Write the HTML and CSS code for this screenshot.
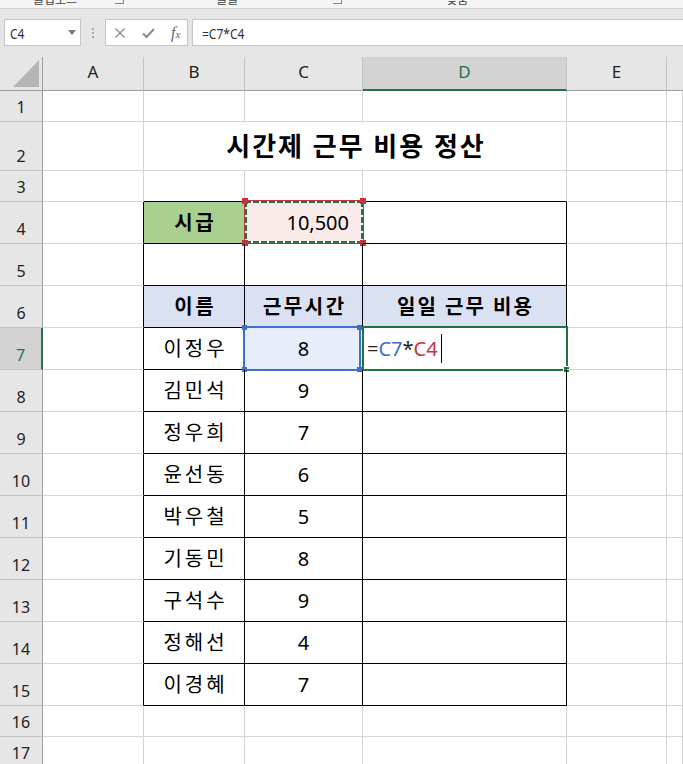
FILE: index.html
```html
<!DOCTYPE html>
<html lang="ko">
<head>
<meta charset="utf-8">
<title>시간제 근무 비용 정산</title>
<link rel="stylesheet" href="styles.css">
</head>
<body>
<div class="ribbon">
  <span class="rlabel l1">클립보드</span>
  <span class="launch k1"></span>
  <span class="rlabel l2">글꼴</span>
  <span class="launch k2"></span>
  <span class="rlabel l3">맞춤</span>
</div>
<div class="fbar">
  <div class="namebox"><span class="nbtext">C4</span><span class="nbarrow"></span></div>
  <div class="dots"><i></i><i></i><i></i></div>
  <div class="btns">
    <svg class="ico" width="12" height="12" viewBox="0 0 12 12"><path d="M1.5 1.5 L10.5 10.5 M10.5 1.5 L1.5 10.5" stroke="#8a8a8a" stroke-width="1.4" fill="none"/></svg>
    <svg class="ico" width="13" height="12" viewBox="0 0 13 12"><path d="M1 6.5 L4.5 10 L12 2" stroke="#8a8a8a" stroke-width="2" fill="none"/></svg>
    <span class="fx"><span class="f">f</span><span class="x">x</span></span>
  </div>
  <div class="finput"><span class="ftext">=C7*C4</span></div>
</div>
<div class="sheet">
  <div class="corner"><svg width="43" height="34" viewBox="0 0 43 34"><path d="M39 3 L39 30 L13 30 Z" fill="#b5b5b5"/></svg></div>
  <div class="ch">A</div><div class="ch">B</div><div class="ch">C</div><div class="ch sel">D</div><div class="ch">E</div><div class="ch last"></div>

  <div class="rh">1</div><div class="c"></div><div class="c"></div><div class="c"></div><div class="c"></div><div class="c"></div><div class="c"></div>

  <div class="rh">2</div><div class="c"></div><div class="c title">시간제 근무 비용 정산</div><div class="c"></div><div class="c"></div>

  <div class="rh">3</div><div class="c"></div><div class="c bb"></div><div class="c bb"></div><div class="c bb"></div><div class="c"></div><div class="c"></div>

  <div class="rh">4</div><div class="c br"></div><div class="c t green bold kb">시급</div><div class="c t rate">10,500<span class="refred"><span class="ants"></span><i class="q tl"></i><i class="q tr"></i><i class="q bl"></i><i class="q br2"></i></span></div><div class="c t"></div><div class="c"></div><div class="c"></div>

  <div class="rh">5</div><div class="c br"></div><div class="c t"></div><div class="c t"></div><div class="c t"></div><div class="c"></div><div class="c"></div>

  <div class="rh">6</div><div class="c br"></div><div class="c t head bold kb">이름</div><div class="c t head bold kb">근무시간</div><div class="c t head bold kh">일일 근무 비용</div><div class="c"></div><div class="c"></div>

  <div class="rh rsel">7</div><div class="c br"></div><div class="c t k">이정우</div><div class="c t blue">8<span class="refblue"><i class="q tl"></i><i class="q tr"></i><i class="q bl"></i><i class="q br2"></i></span></div><div class="c t edit"><span class="eq">=</span><span class="cb">C7</span><span class="eq">*</span><span class="cr">C4</span><span class="caret"></span><span class="active"><i class="handle"></i></span></div><div class="c"></div><div class="c"></div>

  <div class="rh">8</div><div class="c br"></div><div class="c t k">김민석</div><div class="c t">9</div><div class="c t"></div><div class="c"></div><div class="c"></div>

  <div class="rh">9</div><div class="c br"></div><div class="c t k">정우희</div><div class="c t">7</div><div class="c t"></div><div class="c"></div><div class="c"></div>

  <div class="rh">10</div><div class="c br"></div><div class="c t k">윤선동</div><div class="c t">6</div><div class="c t"></div><div class="c"></div><div class="c"></div>

  <div class="rh">11</div><div class="c br"></div><div class="c t k">박우철</div><div class="c t">5</div><div class="c t"></div><div class="c"></div><div class="c"></div>

  <div class="rh">12</div><div class="c br"></div><div class="c t k">기동민</div><div class="c t">8</div><div class="c t"></div><div class="c"></div><div class="c"></div>

  <div class="rh">13</div><div class="c br"></div><div class="c t k">구석수</div><div class="c t">9</div><div class="c t"></div><div class="c"></div><div class="c"></div>

  <div class="rh">14</div><div class="c br"></div><div class="c t k">정해선</div><div class="c t">4</div><div class="c t"></div><div class="c"></div><div class="c"></div>

  <div class="rh">15</div><div class="c br"></div><div class="c t k">이경혜</div><div class="c t">7</div><div class="c t"></div><div class="c"></div><div class="c"></div>

  <div class="rh">16</div><div class="c"></div><div class="c"></div><div class="c"></div><div class="c"></div><div class="c"></div><div class="c"></div>

  <div class="rh">17</div><div class="c"></div><div class="c"></div><div class="c"></div><div class="c"></div><div class="c"></div><div class="c"></div>
</div>
</body>
</html>
```
FILE: styles.css
```css
* { box-sizing: border-box; }
html, body { margin: 0; padding: 0; }
body {
  width: 683px;
  height: 764px;
  overflow: hidden;
  background: #ffffff;
  font-family: "Noto Sans", "Noto Sans CJK KR", sans-serif;
  color: #000;
}

/* ribbon remnant */
.ribbon {
  height: 9px;
  background: #f5f5f5;
  border-bottom: 1px solid #d2d2d2;
  overflow: hidden;
  display: flex;
  align-items: flex-start;
  font-family: "Noto Sans CJK KR", sans-serif;
  font-size: 12px;
  line-height: 12px;
  color: #444;
}
.rlabel { margin-top: -7px; white-space: nowrap; }
.l1 { margin-left: 33px; }
.l2 { margin-left: 92px; }
.l3 { margin-left: 104px; }
.launch {
  width: 9px; height: 9px;
  margin-top: -5px;
  border-right: 1px solid #888;
  border-bottom: 1px solid #888;
}
.k1 { margin-left: 38px; }
.k2 { margin-left: 95px; }

/* formula bar */
.fbar {
  height: 48px;
  background: #e6e6e6;
  padding-top: 10px;
  display: flex;
  align-items: flex-start;
}
.namebox {
  margin-left: 4px;
  width: 77px;
  height: 27px;
  background: #fff;
  border: 1px solid #c6c6c6;
  display: flex;
  align-items: center;
  justify-content: space-between;
  padding: 0 4px 0 5px;
}
.nbtext, .ftext {
  display: inline-block;
  font-family: "Noto Sans", sans-serif;
  font-size: 15px;
  color: #333;
  transform: scaleX(0.8);
  transform-origin: left center;
}
.nbarrow {
  width: 0; height: 0;
  border-left: 4px solid transparent;
  border-right: 4px solid transparent;
  border-top: 5px solid #7a7a7a;
}
.dots {
  width: 24px;
  height: 27px;
  display: flex;
  flex-direction: column;
  align-items: center;
  justify-content: center;
  gap: 2px;
}
.dots i {
  display: block;
  width: 2px; height: 2px;
  background: #a8a8a8;
}
.btns {
  width: 83px;
  height: 27px;
  background: #fff;
  border: 1px solid #c6c6c6;
  display: flex;
  align-items: center;
  padding-left: 8px;
}
.ico { display: block; }
.btns .ico + .ico { margin-left: 16px; }
.fx {
  margin-left: 16px;
  font-family: "Liberation Serif", serif;
  font-style: italic;
  color: #666;
  line-height: 1;
}
.fx .f { font-size: 16px; }
.fx .x { font-size: 11px; }
.finput {
  margin-left: 4px;
  flex: 1;
  height: 27px;
  background: #fff;
  border: 1px solid #c6c6c6;
  border-right: none;
  display: flex;
  align-items: center;
  padding-left: 9px;
}

/* sheet grid */
.sheet {
  display: grid;
  grid-template-columns: 43px 101px 101px 118px 204px 100px 16px;
  grid-template-rows: 34px 31px 49px 31px repeat(12, 42px) 31px 31px;
}
.corner {
  background: #e6e6e6;
  border-right: 1px solid #9e9e9e;
  border-bottom: 1px solid #9e9e9e;
}
.corner svg { display: block; }
.ch {
  background: #e6e6e6;
  border-right: 1px solid #c3c3c3;
  border-bottom: 1px solid #9e9e9e;
  font-size: 17px;
  color: #222;
  display: flex;
  align-items: center;
  justify-content: center;
  padding-bottom: 5px;
}
.ch.sel {
  background: #d3d3d3;
  color: #217346;
  border-bottom: 2px solid #217346;
  padding-bottom: 4px;
}
.ch.last { border-right: none; }
.rh {
  background: #e6e6e6;
  border-right: 1px solid #9e9e9e;
  border-bottom: 1px solid #c3c3c3;
  font-size: 16px;
  line-height: 16px;
  color: #222;
  display: flex;
  align-items: flex-end;
  justify-content: center;
  padding-bottom: 6px;
}
.rh.rsel {
  background: #d3d3d3;
  color: #217346;
  border-right: 2px solid #217346;
}
.c {
  border-right: 1px solid #d4d4d4;
  border-bottom: 1px solid #d4d4d4;
  position: relative;
}
.c.br { border-right-color: #000; }
.c.bb { border-bottom-color: #000; }
.c.t {
  border-right-color: #000;
  border-bottom-color: #000;
  font-size: 20px;
  line-height: 41px;
  text-align: center;
  white-space: nowrap;
}
.c.t.k { letter-spacing: 3px; text-indent: 3px; }
.c.t.kb { letter-spacing: 2.5px; text-indent: 2.5px; }
.c.t.kh { letter-spacing: 2px; text-indent: 2px; }
.title {
  grid-column: span 3;
  font-size: 26px;
  font-weight: 700;
  line-height: 48px;
  text-align: center;
  letter-spacing: 2px;
  text-indent: 2px;
}
.bold { font-weight: 700; }
.green { background: #a9d08e; }
.head { background: #d9e1f2; }
.rate {
  background: #fbeaea;
  text-align: right !important;
  padding-right: 13px;
}
.blue { background: #e8eef9; }

/* reference highlight boxes (overlays) */
.refred {
  position: absolute;
  top: -2px; left: -1px; right: -2px; bottom: -1px;
  border: 1px solid #c8323c;
}
.ants {
  position: absolute;
  inset: 0;
  background:
    repeating-linear-gradient(90deg, #217346 0 6px, #ffffff 6px 8px) top left / 100% 2px no-repeat,
    repeating-linear-gradient(90deg, #217346 0 6px, #ffffff 6px 8px) bottom left / 100% 2px no-repeat,
    repeating-linear-gradient(180deg, #217346 0 6px, #ffffff 6px 8px) top left / 2px 100% no-repeat,
    repeating-linear-gradient(180deg, #217346 0 6px, #ffffff 6px 8px) top right / 2px 100% no-repeat;
}
.refblue {
  position: absolute;
  top: -2px; left: -2px; right: 1px; bottom: -2px;
  border: 2px solid #3d6fcc;
}
.q {
  position: absolute;
  width: 6px; height: 6px;
}
.refred .q { background: #c8323c; }
.refblue .q { background: #3d6fcc; width: 5px; height: 5px; }
.q.tl { top: -3px; left: -3px; }
.q.tr { top: -3px; right: -3px; }
.q.bl { bottom: -3px; left: -3px; }
.q.br2 { bottom: -3px; right: -3px; }

/* editing cell */
.edit {
  text-align: left !important;
  padding-left: 4px;
  display: flex;
  align-items: center;
}
.eq { color: #222; }
.cb { color: #3d6fcc; }
.cr { color: #c8323c; }
.caret {
  width: 1px;
  height: 29px;
  background: #000;
  margin-left: 3px;
}
.active {
  position: absolute;
  top: -2px; left: -1px; right: -2px; bottom: -2px;
  border: 2px solid #217346;
}
.handle {
  position: absolute;
  right: -3px; bottom: -3px;
  width: 6px; height: 6px;
  background: #217346;
  border-left: 1px solid #fff;
  border-top: 1px solid #fff;
}
```
